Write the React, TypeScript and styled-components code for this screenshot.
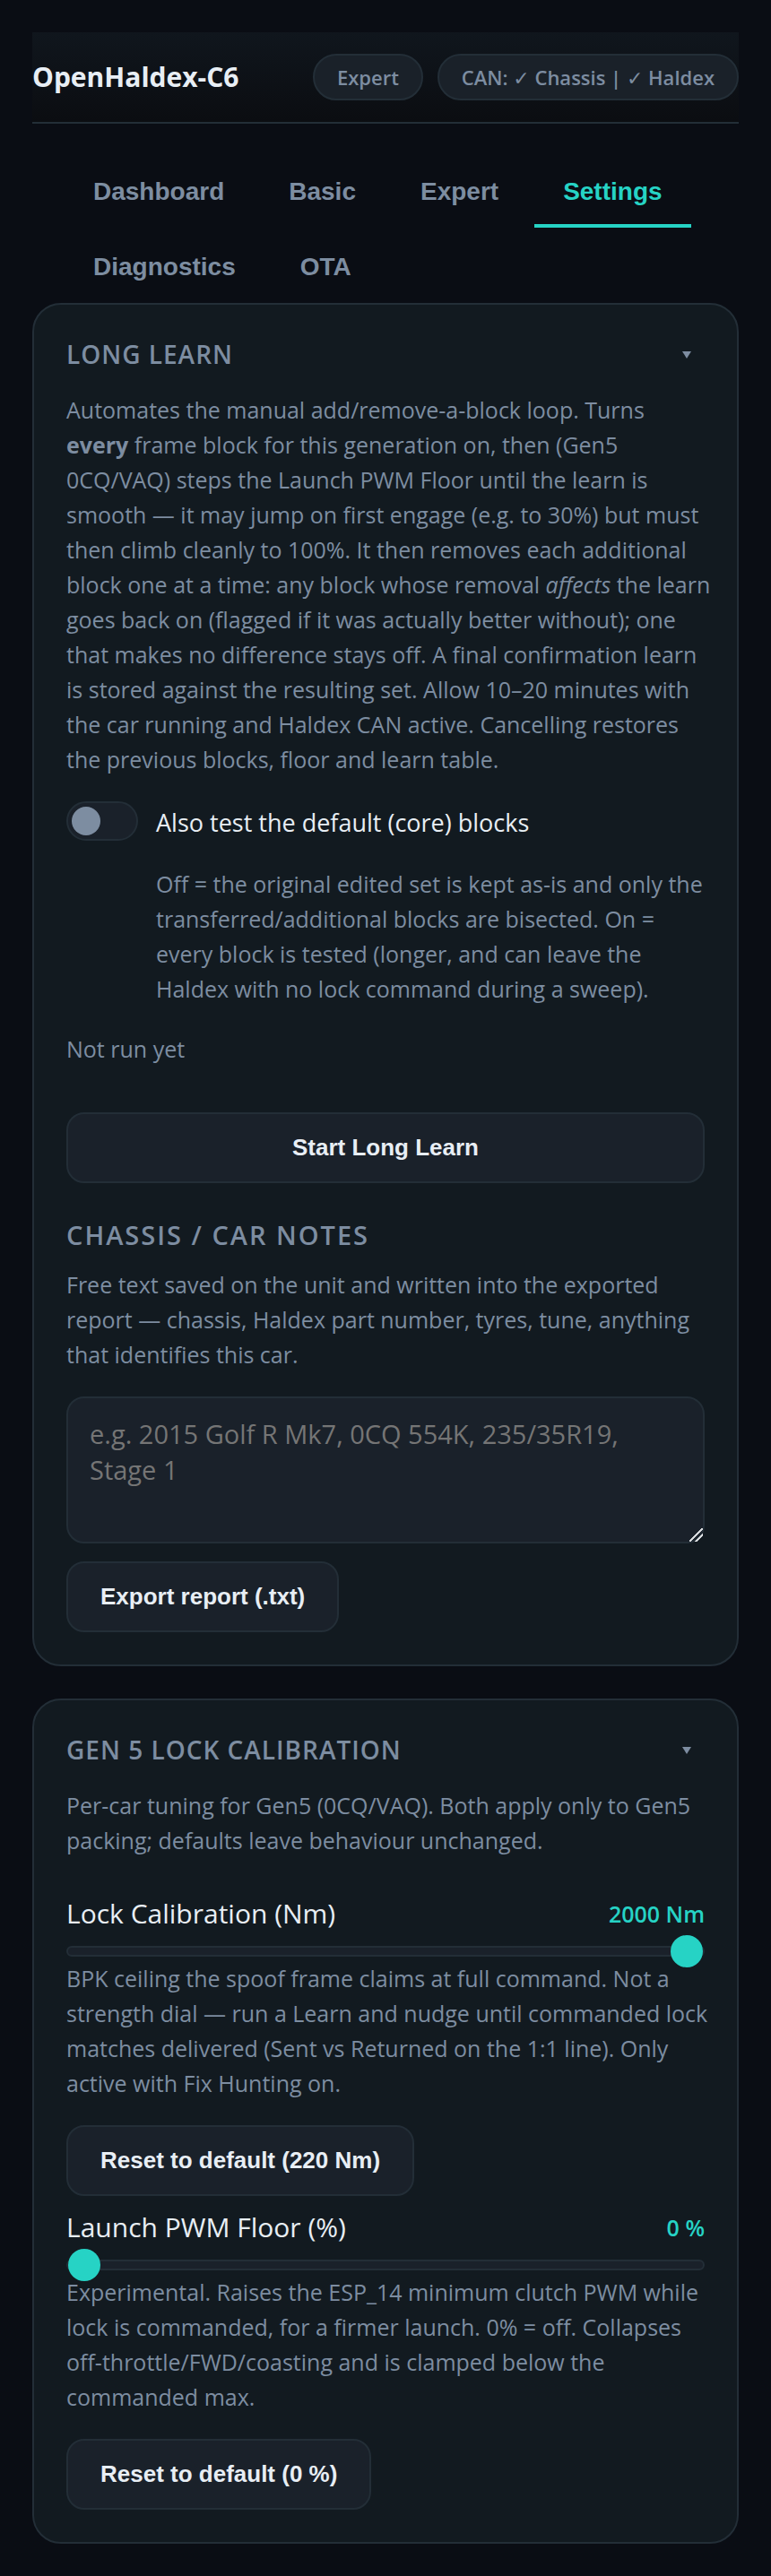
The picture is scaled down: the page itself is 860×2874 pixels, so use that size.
import React, { Fragment, useState } from 'react';
import styled, { createGlobalStyle } from 'styled-components';

const color = {
  page: '#0a0d14',
  card: '#121a20',
  control: '#1a212a',
  line: '#232e37',
  muted: '#7d8da1',
  text: '#e8eef4',
  accent: '#26d3c5',
};

const GlobalStyle = createGlobalStyle`
  *, *::before, *::after { box-sizing: border-box; }
  body {
    margin: 0;
    background: ${color.page};
    color: ${color.text};
    font-family: "Open Sans", "Noto Sans", "DejaVu Sans", sans-serif;
  }
  h1, h2, h3, p { margin: 0; }
`;

const Page = styled.div`
  padding: 36px;
`;

const Header = styled.header`
  display: flex;
  align-items: center;
  justify-content: space-between;
  padding: 24px 0;
  border-bottom: 2px solid ${color.line};
  background: linear-gradient(180deg, #10161d, #0b0d11);
`;

const Brand = styled.h1`
  font-size: 30px;
  line-height: 40px;
  font-weight: 700;
`;

const Pills = styled.div`
  display: flex;
  gap: 16px;
`;

const Pill = styled.span`
  padding: 8px 25px;
  border: 2px solid ${color.line};
  border-radius: 26px;
  background: #1a2129;
  color: ${color.muted};
  font-size: 22px;
  line-height: 32px;
  font-weight: 600;
  white-space: nowrap;
`;

const Tabs = styled.nav`
  display: flex;
  flex-wrap: wrap;
  gap: 4px 8px;
  margin-top: 36px;
  padding: 0 36px;
`;

const Tab = styled.button<{ $active: boolean }>`
  height: 80px;
  padding: 4px 32px 0;
  border: 0;
  border-bottom: 4px solid ${(p) => (p.$active ? color.accent : 'transparent')};
  background: none;
  color: ${(p) => (p.$active ? color.accent : color.muted)};
  font: 700 28px "Liberation Sans", Arial, sans-serif;
  cursor: pointer;
`;

const Cards = styled.main`
  display: flex;
  flex-direction: column;
  gap: 36px;
`;

const Card = styled.section`
  padding: 36px;
  border: 2px solid ${color.line};
  border-radius: 32px;
  background: ${color.card};
`;

const CardHead = styled.div`
  display: flex;
  align-items: center;
  justify-content: space-between;
  margin-bottom: 24px;
`;

const CardTitle = styled.h2`
  color: ${color.muted};
  font-size: 28px;
  line-height: 38px;
  font-weight: 600;
  letter-spacing: 1px;
  text-transform: uppercase;
`;

const SubTitle = styled.h3`
  margin: 39px 0 17px;
  color: ${color.muted};
  font-size: 29px;
  line-height: 38px;
  font-weight: 600;
  letter-spacing: 2px;
  text-transform: uppercase;
`;

const Collapse = styled.button`
  display: flex;
  padding: 14px 15px 12px;
  border: 0;
  background: none;
  color: ${color.muted};
  cursor: pointer;
`;

const Copy = styled.p`
  color: ${color.muted};
  font-size: 25px;
  line-height: 39px;
  white-space: nowrap;
`;

const Hint = styled(Copy)`
  margin: 25px 0 28px 100px;
`;

const SliderHelp = styled(Copy)`
  margin: 5px 0 27px;
`;

const SwitchRow = styled.label`
  display: flex;
  align-items: flex-start;
  gap: 20px;
  margin-top: 27px;
  font-size: 27px;
  line-height: 48px;
`;

const Switch = styled.input`
  display: flex;
  align-items: center;
  flex: none;
  appearance: none;
  width: 80px;
  height: 44px;
  margin: 0;
  padding: 0 4px;
  border: 2px solid ${color.line};
  border-radius: 22px;
  background: ${color.control};
  &::before {
    content: "";
    width: 32px;
    height: 32px;
    border-radius: 50%;
    background: ${color.muted};
  }
  &:checked { justify-content: flex-end; }
  &:checked::before { background: ${color.accent}; }
`;

const Button = styled.button<{ $wide?: boolean }>`
  display: block;
  width: ${(p) => (p.$wide ? '100%' : 'auto')};
  padding: 24px 36px;
  border: 2px solid ${color.line};
  border-radius: 20px;
  background: ${color.control};
  color: ${color.text};
  font: 700 26px/27px "Liberation Sans", Arial, sans-serif;
  cursor: pointer;
`;

const Status = styled(Copy)`
  margin-bottom: 51px;
`;

const Notes = styled.textarea`
  display: block;
  width: 100%;
  height: 164px;
  margin: 27px 0 20px;
  padding: 20px 24px;
  border: 2px solid ${color.line};
  border-radius: 20px;
  background: ${color.control};
  color: ${color.text};
  font: 400 29px/40px "Open Sans", "Noto Sans", sans-serif;
  resize: vertical;
  &::placeholder { color: #757575; }
  &::-webkit-resizer {
    background: linear-gradient(
      135deg,
      transparent 0 46%,
      #d5d8db 46% 54%,
      transparent 54% 70%,
      #d5d8db 70% 78%,
      transparent 78%
    );
  }
`;

const SliderBlock = styled.div<{ $first?: boolean }>`
  margin-top: ${(p) => (p.$first ? '38px' : '11px')};
`;

const SliderHead = styled.div`
  display: flex;
  align-items: center;
  justify-content: space-between;
  margin-bottom: 12px;
`;

const SliderLabel = styled.label`
  font-size: 30px;
  line-height: 48px;
`;

const SliderValue = styled.output`
  color: ${color.accent};
  font-size: 25px;
  line-height: 39px;
  font-weight: 600;
`;

const Range = styled.input`
  display: block;
  appearance: none;
  width: 100%;
  height: 12px;
  margin: 0;
  border: 2px solid ${color.line};
  border-radius: 6px;
  background: ${color.control};
  &::-webkit-slider-thumb {
    appearance: none;
    width: 36px;
    height: 36px;
    border-radius: 50%;
    background: ${color.accent};
  }
`;

function Lines({ items }: { items: React.ReactNode[] }) {
  return (
    <>
      {items.map((item, i) => (
        <Fragment key={i}>
          {i > 0 && <br />}
          {item}
        </Fragment>
      ))}
    </>
  );
}

function Heading({ title }: { title: string }) {
  return (
    <CardHead>
      <CardTitle>{title}</CardTitle>
      <Collapse type="button" aria-label={`Collapse ${title}`}>
        <svg width="10" height="8" viewBox="0 0 10 8" aria-hidden="true">
          <path d="M0 0h10L5 8z" fill="currentColor" />
        </svg>
      </Collapse>
    </CardHead>
  );
}

interface SliderProps {
  id: string;
  label: string;
  unit: string;
  max: number;
  initial: number;
  fallback: number;
  help: string[];
  first?: boolean;
}

function Slider({ id, label, unit, max, initial, fallback, help, first }: SliderProps) {
  const [value, setValue] = useState(initial);
  return (
    <SliderBlock $first={first}>
      <SliderHead>
        <SliderLabel htmlFor={id}>{label}</SliderLabel>
        <SliderValue htmlFor={id}>{`${value} ${unit}`}</SliderValue>
      </SliderHead>
      <Range
        id={id}
        type="range"
        min={0}
        max={max}
        value={value}
        onChange={(e) => setValue(Number(e.target.value))}
      />
      <SliderHelp>
        <Lines items={help} />
      </SliderHelp>
      <Button type="button" onClick={() => setValue(fallback)}>
        {`Reset to default (${fallback} ${unit})`}
      </Button>
    </SliderBlock>
  );
}

const tabs = ['Dashboard', 'Basic', 'Expert', 'Settings', 'Diagnostics', 'OTA'];

export default function App() {
  const [tab, setTab] = useState('Settings');
  const [core, setCore] = useState(false);

  return (
    <Page>
      <GlobalStyle />
      <Header>
        <Brand>OpenHaldex-C6</Brand>
        <Pills>
          <Pill>Expert</Pill>
          <Pill>CAN: ✓ Chassis | ✓ Haldex</Pill>
        </Pills>
      </Header>
      <Tabs>
        {tabs.map((name) => (
          <Tab key={name} type="button" $active={name === tab} onClick={() => setTab(name)}>
            {name}
          </Tab>
        ))}
      </Tabs>
      <Cards>
        <Card>
          <Heading title="Long Learn" />
          <Copy>
            <Lines
              items={[
                'Automates the manual add/remove-a-block loop. Turns',
                <><strong>every</strong> frame block for this generation on, then (Gen5</>,
                '0CQ/VAQ) steps the Launch PWM Floor until the learn is',
                'smooth — it may jump on first engage (e.g. to 30%) but must',
                'then climb cleanly to 100%. It then removes each additional',
                <>block one at a time: any block whose removal <em>affects</em> the learn</>,
                'goes back on (flagged if it was actually better without); one',
                'that makes no difference stays off. A final confirmation learn',
                'is stored against the resulting set. Allow 10–20 minutes with',
                'the car running and Haldex CAN active. Cancelling restores',
                'the previous blocks, floor and learn table.',
              ]}
            />
          </Copy>
          <SwitchRow>
            <Switch type="checkbox" checked={core} onChange={(e) => setCore(e.target.checked)} />
            Also test the default (core) blocks
          </SwitchRow>
          <Hint>
            <Lines
              items={[
                'Off = the original edited set is kept as-is and only the',
                'transferred/additional blocks are bisected. On =',
                'every block is tested (longer, and can leave the',
                'Haldex with no lock command during a sweep).',
              ]}
            />
          </Hint>
          <Status>Not run yet</Status>
          <Button type="button" $wide>Start Long Learn</Button>
          <SubTitle id="notes-title">Chassis / Car Notes</SubTitle>
          <Copy>
            <Lines
              items={[
                'Free text saved on the unit and written into the exported',
                'report — chassis, Haldex part number, tyres, tune, anything',
                'that identifies this car.',
              ]}
            />
          </Copy>
          <Notes
            aria-labelledby="notes-title"
            placeholder="e.g. 2015 Golf R Mk7, 0CQ 554K, 235/35R19, Stage 1"
          />
          <Button type="button">Export report (.txt)</Button>
        </Card>
        <Card>
          <Heading title="Gen 5 Lock Calibration" />
          <Copy>
            <Lines
              items={[
                'Per-car tuning for Gen5 (0CQ/VAQ). Both apply only to Gen5',
                'packing; defaults leave behaviour unchanged.',
              ]}
            />
          </Copy>
          <Slider
            first
            id="lock-calibration"
            label="Lock Calibration (Nm)"
            unit="Nm"
            max={2000}
            initial={2000}
            fallback={220}
            help={[
              'BPK ceiling the spoof frame claims at full command. Not a',
              'strength dial — run a Learn and nudge until commanded lock',
              'matches delivered (Sent vs Returned on the 1:1 line). Only',
              'active with Fix Hunting on.',
            ]}
          />
          <Slider
            id="launch-floor"
            label="Launch PWM Floor (%)"
            unit="%"
            max={100}
            initial={0}
            fallback={0}
            help={[
              'Experimental. Raises the ESP_14 minimum clutch PWM while',
              'lock is commanded, for a firmer launch. 0% = off. Collapses',
              'off-throttle/FWD/coasting and is clamped below the',
              'commanded max.',
            ]}
          />
        </Card>
      </Cards>
    </Page>
  );
}
